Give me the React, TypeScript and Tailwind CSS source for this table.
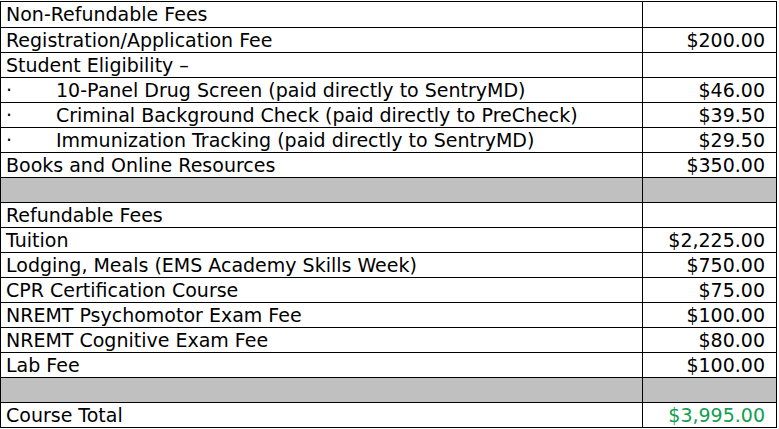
const rows: { label: string; amount?: string; bullet?: boolean; gray?: boolean; total?: boolean }[] = [
  { label: 'Non-Refundable Fees' },
  { label: 'Registration/Application Fee', amount: '$200.00' },
  { label: 'Student Eligibility –' },
  { label: '10-Panel Drug Screen (paid directly to SentryMD)', amount: '$46.00', bullet: true },
  { label: 'Criminal Background Check (paid directly to PreCheck)', amount: '$39.50', bullet: true },
  { label: 'Immunization Tracking (paid directly to SentryMD)', amount: '$29.50', bullet: true },
  { label: 'Books and Online Resources', amount: '$350.00' },
  { label: '', gray: true },
  { label: 'Refundable Fees' },
  { label: 'Tuition', amount: '$2,225.00' },
  { label: 'Lodging, Meals (EMS Academy Skills Week)', amount: '$750.00' },
  { label: 'CPR Certification Course', amount: '$75.00' },
  { label: 'NREMT Psychomotor Exam Fee', amount: '$100.00' },
  { label: 'NREMT Cognitive Exam Fee', amount: '$80.00' },
  { label: 'Lab Fee', amount: '$100.00' },
  { label: '', gray: true },
  { label: 'Course Total', amount: '$3,995.00', total: true },
]

export default function App() {
  return (
    <div className="w-[779px] h-[429px] bg-white pt-[1px] font-['DejaVu_Sans',Verdana,sans-serif] text-[19px] text-black">
      <div className="w-[777px] border border-black">
        {rows.map((r, i) => (
          <div
            key={i}
            className={`flex ${i === 0 ? 'h-[26px]' : i === rows.length - 1 ? 'h-[24px]' : 'h-[25px]'} ${i < rows.length - 1 ? 'border-b border-black' : ''} ${r.gray ? 'bg-[#c0c0c0]' : ''}`}
          >
            <div className="w-[642px] border-r border-black flex items-center pl-[5px] whitespace-nowrap leading-none">
              {r.bullet ? (
                <>
                  <span className="w-[50px]">·</span>
                  <span>{r.label}</span>
                </>
              ) : (
                r.label
              )}
            </div>
            <div className={`flex-1 flex items-center justify-end pr-[11px] leading-none ${r.total ? 'text-[#10a050]' : ''}`}>
              {r.amount}
            </div>
          </div>
        ))}
      </div>
    </div>
  )
}
